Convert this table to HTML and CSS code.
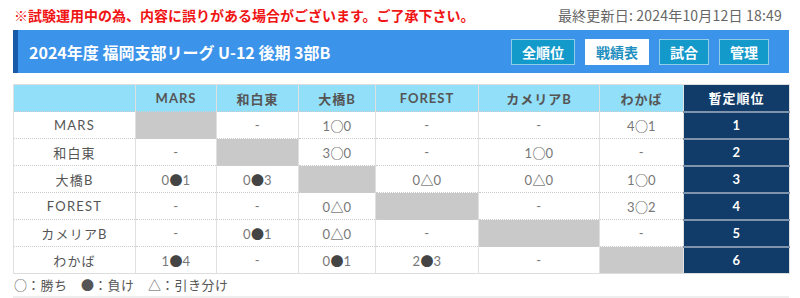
FILE: index.html
```html
<!DOCTYPE html>
<html lang="ja">
<head>
<meta charset="utf-8">
<link rel="stylesheet" href="styles.css">
</head>
<body>
<div class="page">
  <div class="topline">
    <span class="notice">※試験運用中の為、内容に誤りがある場合がございます。ご了承下さい。</span>
    <span class="updated">最終更新日: 2024年10月12日 18:49</span>
  </div>
  <div class="titlebar">
    <h1 class="title">2024年度 福岡支部リーグ U-12 後期 3部B</h1>
    <nav class="tabs">
      <a class="tab tab-w64">全順位</a>
      <a class="tab tab-w64 active">戦績表</a>
      <a class="tab tab-w50">試合</a>
      <a class="tab tab-w50">管理</a>
    </nav>
  </div>
  <table class="grid">
    <colgroup>
      <col class="c0"><col class="c1"><col class="c2"><col class="c3"><col class="c4"><col class="c5"><col class="c6"><col class="c7">
    </colgroup>
    <thead>
      <tr><th></th><th>MARS</th><th>和白東</th><th>大橋B</th><th>FOREST</th><th>カメリアB</th><th>わかば</th><th class="rank">暫定順位</th></tr>
    </thead>
    <tbody>
      <tr><td class="team">MARS</td><td class="self"></td><td>-</td><td>1<span class="mk">○</span>0</td><td>-</td><td>-</td><td>4<span class="mk">○</span>1</td><td class="rank">1</td></tr>
      <tr><td class="team">和白東</td><td>-</td><td class="self"></td><td>3<span class="mk">○</span>0</td><td>-</td><td>1<span class="mk">○</span>0</td><td>-</td><td class="rank">2</td></tr>
      <tr><td class="team">大橋B</td><td>0<span class="mk">●</span>1</td><td>0<span class="mk">●</span>3</td><td class="self"></td><td>0<span class="mk">△</span>0</td><td>0<span class="mk">△</span>0</td><td>1<span class="mk">○</span>0</td><td class="rank">3</td></tr>
      <tr><td class="team">FOREST</td><td>-</td><td>-</td><td>0<span class="mk">△</span>0</td><td class="self"></td><td>-</td><td>3<span class="mk">○</span>2</td><td class="rank">4</td></tr>
      <tr><td class="team">カメリアB</td><td>-</td><td>0<span class="mk">●</span>1</td><td>0<span class="mk">△</span>0</td><td>-</td><td class="self"></td><td>-</td><td class="rank">5</td></tr>
      <tr><td class="team">わかば</td><td>1<span class="mk">●</span>4</td><td>-</td><td>0<span class="mk">●</span>1</td><td>2<span class="mk">●</span>3</td><td>-</td><td class="self"></td><td class="rank">6</td></tr>
    </tbody>
  </table>
  <div class="legend"><span class="mk">○</span>：勝ち　<span class="mk">●</span>：負け　<span class="mk">△</span>：引き分け</div>
  <div class="footbar"></div>
</div>
</body>
</html>
```
FILE: styles.css
```css
* { box-sizing: border-box; }
html, body { margin: 0; padding: 0; background: #fff; }
body {
  font-family: Lato, "Noto Sans CJK JP", sans-serif;
  color: #555;
}
.page {
  width: 776px;
  margin-left: 13px;
}
.topline {
  display: flex;
  justify-content: space-between;
  align-items: center;
  height: 30px;
  padding: 0 7px 0 1px;
}
.notice {
  color: #f01414;
  font-weight: bold;
  font-size: 14px;
  font-family: "Noto Sans CJK JP", sans-serif;
}
.updated {
  color: #666;
  font-size: 14px;
  font-family: "Noto Sans CJK JP", sans-serif;
  letter-spacing: 0.2px;
}
.titlebar {
  display: flex;
  align-items: center;
  justify-content: space-between;
  height: 43px;
  background: #3b93ea;
  border-left: 5px solid #175ba8;
  padding: 0 20px 0 11px;
}
.title {
  margin: 0;
  color: #fff;
  font-size: 16px;
  font-weight: bold;
  font-family: "Noto Sans CJK JP", sans-serif;
}
.tabs {
  display: flex;
  gap: 10px;
}
.tab {
  display: flex;
  align-items: center;
  justify-content: center;
  height: 26px;
  background: #1499cb;
  border: 1px solid #8fcde8;
  color: #fff;
  font-size: 14px;
  font-weight: bold;
  font-family: "Noto Sans CJK JP", sans-serif;
}
.tab-w64 { width: 64px; }
.tab-w50 { width: 50px; }
.tab.active {
  background: #fff;
  color: #1e8fc0;
  border-color: #fff;
}
.grid {
  margin-top: 11px;
  width: 776px;
  border-collapse: collapse;
  table-layout: fixed;
  font-size: 13px;
  border: 1px solid #ddd;
}
.c0 { width: 122px; }
.c1 { width: 81px; }
.c2 { width: 82px; }
.c3 { width: 77px; }
.c4 { width: 103px; }
.c5 { width: 121px; }
.c6 { width: 84px; }
.c7 { width: 106px; }
.grid th, .grid td {
  height: 27px;
  padding: 0;
  text-align: center;
  vertical-align: middle;
}
.grid th {
  background: #92dff9;
  font-weight: bold;
  color: #555;
  letter-spacing: 1px;
  border-left: 1px solid #e0e0e0;
  border-right: 1px solid #e0e0e0;
}
.grid td {
  border-left: 1px solid #e0e0e0;
  border-right: 1px solid #e0e0e0;
  border-top: 1px dotted #ccc;
  color: #777;
  letter-spacing: 0.5px;
}
.mk {
  font-family: "Noto Sans CJK JP", sans-serif;
  color: #444;
  letter-spacing: 0;
}
.grid td.team {
  color: #555;
  letter-spacing: 1.2px;
}
.grid td.self { background: #c9c9c9; }
.grid .rank {
  background: #113b68;
  color: #fff;
  font-weight: bold;
  border-top: 2px solid #7f93ab;
}
.grid th.rank { border-top: 1px solid #ddd; }
.legend {
  height: 22px;
  line-height: 22px;
  font-size: 13px;
  color: #555;
  padding-left: 1px;
  font-family: "Noto Sans CJK JP", sans-serif;
  letter-spacing: 0.5px;
}
.legend .mk { color: #555; }
.footbar {
  height: 4px;
  background: #eee;
}
```
